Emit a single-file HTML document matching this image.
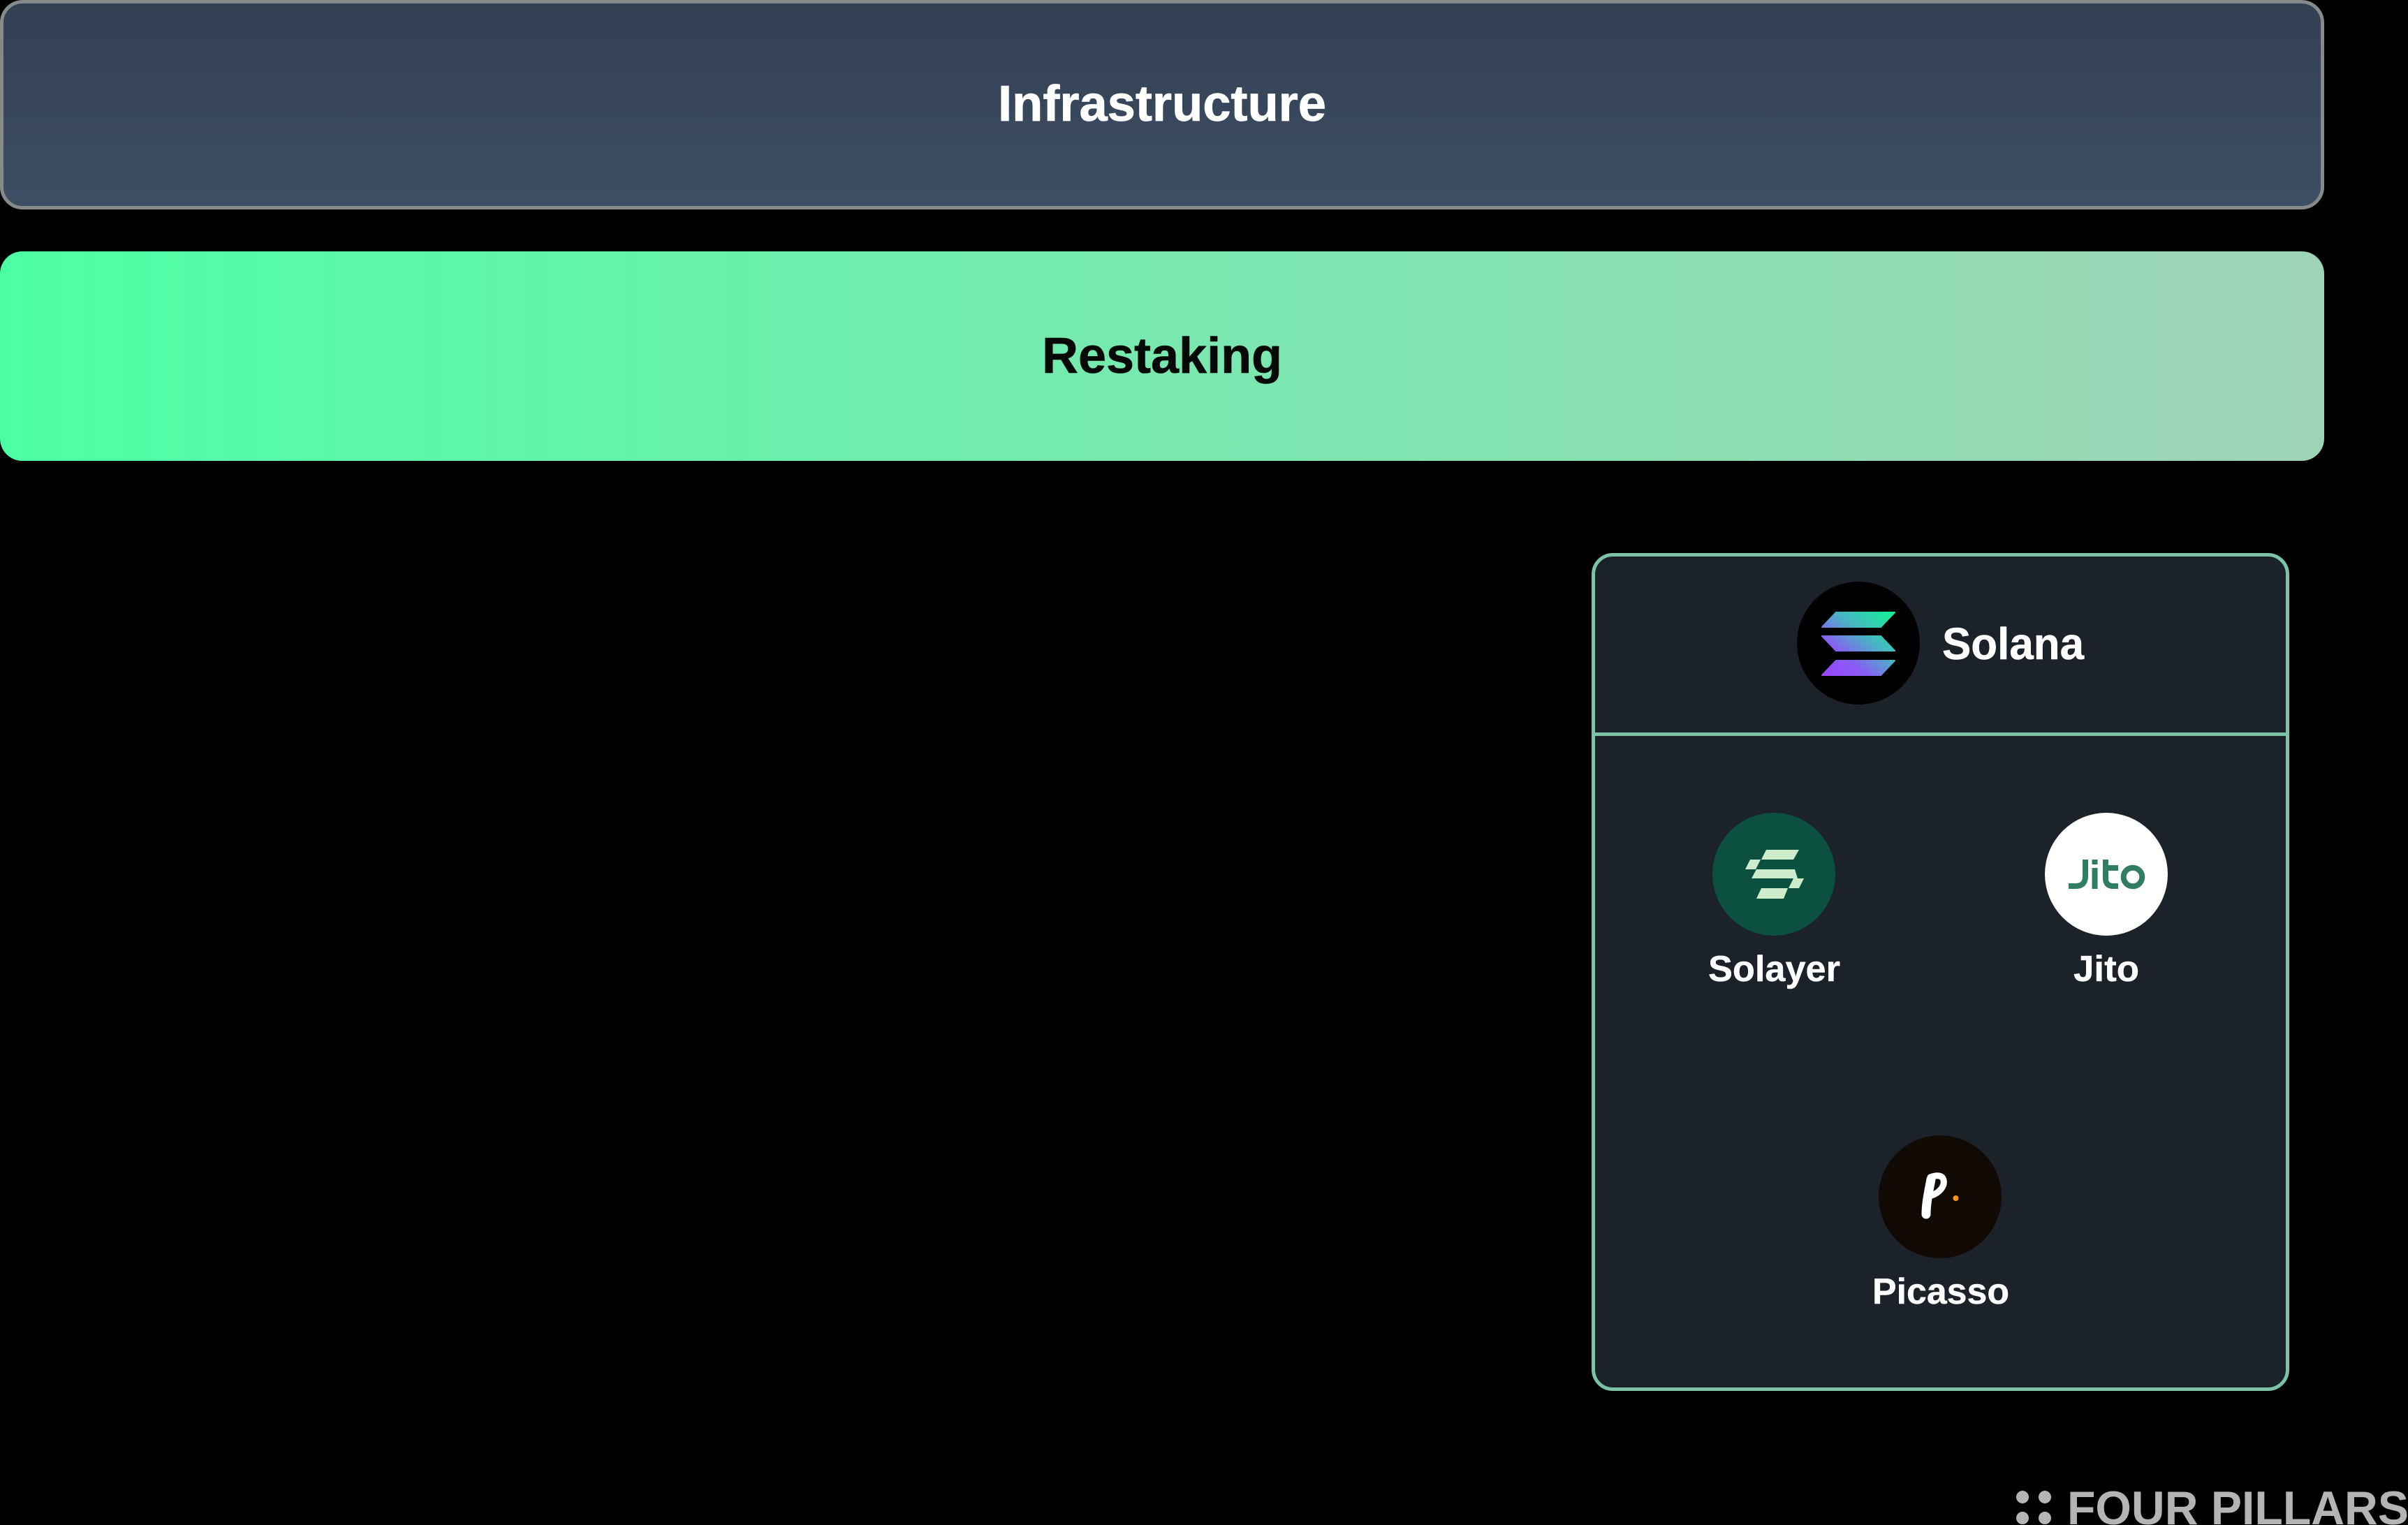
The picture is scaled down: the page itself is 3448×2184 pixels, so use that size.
<!DOCTYPE html>
<html lang="en">
<head>
<meta charset="utf-8">
<title>Restaking</title>
<style>
html,body{margin:0;padding:0;background:#000;width:3448px;height:2184px;overflow:hidden}
svg{display:block}
text{font-family:"Liberation Sans",Arial,sans-serif;font-weight:700}
</style>
</head>
<body>
<svg xmlns="http://www.w3.org/2000/svg" width="3448" height="2184" viewBox="0 0 3448 2184">
<defs>
<linearGradient id="infra" x1="0" y1="0" x2="0" y2="1">
<stop offset="0" stop-color="#343f52"/>
<stop offset="1" stop-color="#3c4e65"/>
</linearGradient>
<linearGradient id="rest" x1="0" y1="0" x2="1" y2="0">
<stop offset="0" stop-color="#4dffa4"/>
<stop offset="0.5" stop-color="#78e8af"/>
<stop offset="1" stop-color="#9fd3b6"/>
</linearGradient>
<linearGradient id="sol" gradientUnits="userSpaceOnUse" x1="2618" y1="975" x2="2704" y2="872">
<stop offset="0" stop-color="#9945ff"/>
<stop offset="0.3" stop-color="#8a5cf5"/>
<stop offset="0.62" stop-color="#48b5c4"/>
<stop offset="1" stop-color="#14f195"/>
</linearGradient>
</defs>

<rect width="3448" height="2184" fill="#000"/>

<rect x="2.5" y="2.5" width="3323" height="295" rx="30" ry="30" fill="url(#infra)" stroke="#858a8a" stroke-width="5"/>
<text x="1429" y="173" font-size="72" fill="#fff" stroke="#fff" stroke-width="0.8" textLength="470" lengthAdjust="spacingAndGlyphs">Infrastructure</text>

<rect x="0" y="360" width="3328" height="300" rx="32" ry="32" fill="url(#rest)"/>
<text x="1492" y="534" font-size="72" fill="#050a08" stroke="#050a08" stroke-width="0.6" textLength="344" lengthAdjust="spacingAndGlyphs">Restaking</text>

<rect x="2281.5" y="794.5" width="994" height="1195" rx="28" ry="28" fill="#1c222a" stroke="#7cc2a6" stroke-width="5"/>
<rect x="2281" y="1049" width="995" height="5" fill="#7cc2a6"/>

<circle cx="2661" cy="921" r="88" fill="#000"/>
<g fill="url(#sol)" stroke="url(#sol)" stroke-width="2" stroke-linejoin="round">
<polygon points="2629,877 2713,877 2693,898 2609,898"/>
<polygon points="2609,911 2693,911 2713,932 2629,932"/>
<polygon points="2629,946 2713,946 2693,967 2609,967"/>
</g>
<text x="2781" y="944" font-size="64" fill="#fff" stroke="#fff" stroke-width="0.5" textLength="203" lengthAdjust="spacingAndGlyphs">Solana</text>

<circle cx="2540" cy="1252" r="88" fill="#0c5040"/>
<g fill="#cdeccb">
<polygon points="2529,1217 2576,1217 2568,1231 2522,1231"/>
<polygon points="2506,1231 2521,1231 2514,1245 2499,1245"/>
<polygon points="2515,1245 2570,1245 2574,1258 2508,1258"/>
<polygon points="2568,1258 2583,1258 2576,1272 2561,1272"/>
<polygon points="2522,1272 2560,1272 2554,1287 2515,1287"/>
</g>
<text x="2446" y="1405" font-size="52" fill="#fff" stroke="#fff" stroke-width="0.4" textLength="189" lengthAdjust="spacingAndGlyphs">Solayer</text>

<circle cx="3016" cy="1252" r="88" fill="#fff"/>
<g fill="none" stroke="#2f7d65" stroke-width="8">
<path d="M2986 1231V1255Q2986 1269 2972 1269H2962"/>
<path d="M2999.500 1243V1273"/>
<path d="M2999.500 1231V1238"/>
<path d="M3015 1231V1258Q3015 1269 3026 1269H3033"/>
<path d="M3015 1243H3033"/>
<circle cx="3054" cy="1256" r="13.300"/>
</g>
<text x="2969" y="1405" font-size="52" fill="#fff" stroke="#fff" stroke-width="0.4" textLength="94" lengthAdjust="spacingAndGlyphs">Jito</text>

<circle cx="2778" cy="1714" r="88" fill="#110a04"/>
<g fill="none" stroke="#fff" stroke-linecap="round" stroke-linejoin="round">
<path d="M2765 1689C2762 1705 2758 1722 2758 1739" stroke-width="13"/>
<path d="M2764 1686C2772 1683 2781 1682 2783 1690C2785 1699 2777 1708 2766 1712" stroke-width="9"/>
</g>
<circle cx="2800.500" cy="1716" r="4" fill="#f7941d"/>
<text x="2681" y="1867" font-size="52" fill="#fff" stroke="#fff" stroke-width="0.4" textLength="196" lengthAdjust="spacingAndGlyphs">Picasso</text>

<g fill="#b4b4b4">
<circle cx="2896" cy="2144" r="9"/>
<circle cx="2928" cy="2144" r="9"/>
<circle cx="2896" cy="2174" r="9"/>
<circle cx="2928" cy="2174" r="9"/>
<text x="2960" y="2183" font-size="68" textLength="489" lengthAdjust="spacingAndGlyphs">FOUR PILLARS</text>
</g>
</svg>
</body>
</html>
